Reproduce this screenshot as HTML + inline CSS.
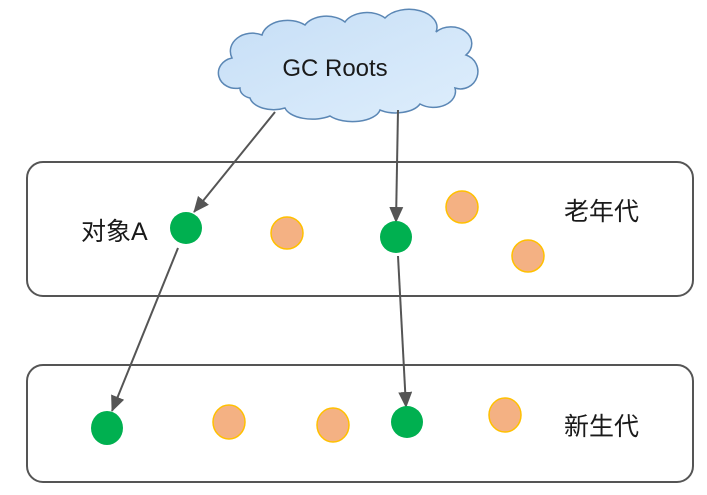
<!DOCTYPE html>
<html><head><meta charset="utf-8"><style>
html,body{margin:0;padding:0;background:#fff;width:707px;height:495px;overflow:hidden}
text{font-family:"Liberation Sans","Noto Sans CJK SC",sans-serif;fill:#1a1a1a}
</style></head><body>
<svg width="707" height="495" viewBox="0 0 707 495" xmlns="http://www.w3.org/2000/svg">
<defs>
<linearGradient id="cg" x1="0" y1="0" x2="1" y2="1"><stop offset="0" stop-color="#c6def6"/><stop offset="1" stop-color="#deeefc"/></linearGradient>
<marker id="ah" markerWidth="16" markerHeight="14" refX="15" refY="7" orient="auto" markerUnits="userSpaceOnUse"><path d="M0,0 L16,7 L0,14 Z" fill="#555"/></marker>
</defs>
<rect x="27" y="162" width="666" height="134" rx="16" fill="#fff" stroke="#555" stroke-width="2"/>
<rect x="27" y="365" width="666" height="117" rx="16" fill="#fff" stroke="#555" stroke-width="2"/>
<path d="M240,88 A16,14 0 0 1 232,58 A22,18 0 0 1 262,35 A26,18 0 0 1 305,25 A24,16 0 0 1 345,22 A24,16 0 0 1 385,18 A28,18 0 0 1 436,32 A20,16 0 0 1 466,55 A16,16 0 0 1 455,88 A22,16 0 0 1 420,104 A26,14 0 0 1 380,110 A28,14 0 0 1 330,116 A28,14 0 0 1 285,108 A24,14 0 0 1 250,98 A14,10 0 0 1 240,88 Z" fill="url(#cg)" stroke="#5b87b5" stroke-width="1.5"/>
<text x="335" y="76" font-size="24" text-anchor="middle">GC Roots</text>
<line x1="275" y1="112" x2="194" y2="212" stroke="#555" stroke-width="2" marker-end="url(#ah)"/>
<line x1="398" y1="110" x2="396" y2="222" stroke="#555" stroke-width="2" marker-end="url(#ah)"/>
<line x1="178" y1="248" x2="112" y2="411" stroke="#555" stroke-width="2" marker-end="url(#ah)"/>
<line x1="398" y1="256" x2="406" y2="407" stroke="#555" stroke-width="2" marker-end="url(#ah)"/>
<g fill="#00b050">
<circle cx="186" cy="228" r="16"/><circle cx="396" cy="237" r="16"/>
<ellipse cx="107" cy="428" rx="16" ry="17"/><ellipse cx="407" cy="422" rx="16" ry="16"/>
</g>
<g fill="#f4b183" stroke="#ffc000" stroke-width="1.5">
<circle cx="287" cy="233" r="16"/><circle cx="462" cy="207" r="16"/><circle cx="528" cy="256" r="16"/>
<ellipse cx="229" cy="422" rx="16" ry="17"/><ellipse cx="333" cy="425" rx="16" ry="17"/><ellipse cx="505" cy="415" rx="16" ry="17"/>
</g>
<text x="81" y="240" font-size="25">对象A</text>
<text x="564" y="220" font-size="25">老年代</text>
<text x="564" y="435" font-size="25">新生代</text>
</svg>
</body></html>
